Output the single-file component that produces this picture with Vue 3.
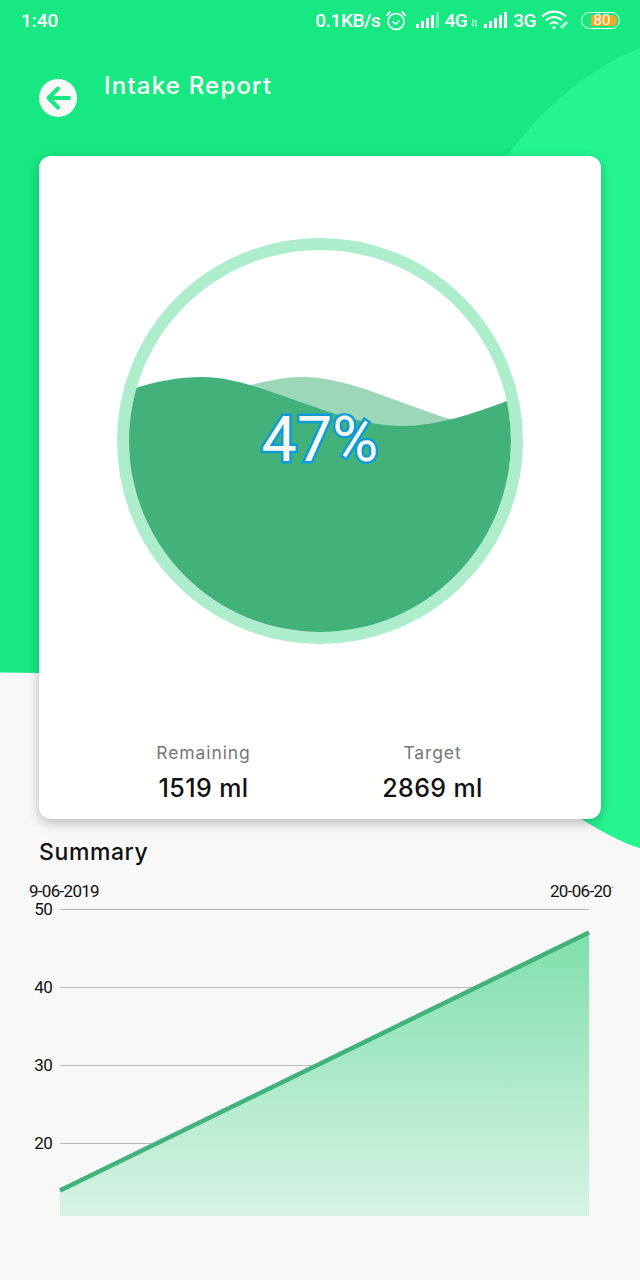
<template>
  <div class="screen">
    <!-- green backdrop with the two curved shapes -->
    <svg class="backdrop" width="640" height="900" viewBox="0 0 640 900">
      <path d="M0 0H640V848C620 842 600 830 580 818L500 720L40 673L0 672.500Z" fill="#17e882" />
      <path d="M640 48C590 68 545 105 507 156L580 818C600 830 620 842 640 848Z" fill="#25f58f" />
    </svg>

    <div class="status-bar">
      <span class="time">1:40</span>
      <div class="status-right">
        <span class="speed">0.1KB/s</span>
        <svg class="alarm" width="22" height="22" viewBox="0 0 22 22" fill="none" stroke="#fff">
          <circle cx="11" cy="12.5" r="8" stroke-width="1.6" />
          <path d="M7.5 12.5l3 2.5 4-3.5" stroke-width="1.5" />
          <path d="M1.5 6.5L5.5 2.5M20.5 6.5L16.5 2.5" stroke-width="1.8" />
        </svg>
        <svg class="signal" width="24" height="18" viewBox="0 0 24 18">
          <rect x="0" y="13" width="3" height="4" fill="#fff" />
          <rect x="5" y="10" width="3" height="7" fill="#fff" />
          <rect x="10" y="7" width="3" height="10" fill="#fff" />
          <rect x="15" y="4" width="3" height="13" fill="#fff" />
          <rect x="20" y="1" width="3" height="16" fill="#fff" opacity="0.4" />
        </svg>
        <span class="net">4G</span>
        <svg class="arrows" width="7" height="8" viewBox="0 0 7 8" fill="none" stroke="#fff" stroke-width="1">
          <path d="M2 0V7M0.5 5.5L2 7M5 8V1M3.5 2.5L5 1" />
        </svg>
        <svg class="signal two" width="24" height="18" viewBox="0 0 24 18">
          <rect x="0" y="13" width="3" height="4" fill="#fff" />
          <rect x="5" y="10" width="3" height="7" fill="#fff" />
          <rect x="10" y="7" width="3" height="10" fill="#fff" />
          <rect x="15" y="4" width="3" height="13" fill="#fff" />
          <rect x="20" y="1" width="3" height="16" fill="#fff" />
        </svg>
        <span class="net">3G</span>
        <svg class="wifi" width="29" height="20" viewBox="0 0 29 20" fill="none" stroke="#fff" stroke-width="2.2">
          <path d="M1 6.5C8 0 18 0 25 6.5" />
          <path d="M5 10.5C10 6 16 6 21 10.5" />
          <path d="M9 14C11.5 12 14.500 12 17 14" />
          <circle cx="13" cy="17.500" r="1.500" fill="#fff" stroke="none" />
          <path d="M20 18L26 12" stroke-width="3" opacity="0.7" />
        </svg>
        <div class="battery">
          <span class="battery-fill">80</span>
        </div>
      </div>
    </div>

    <div class="top-bar">
      <button class="back">
        <svg width="38" height="38" viewBox="0 0 38 38">
          <circle cx="19" cy="19" r="19" fill="#f8f8f8" />
          <path d="M19 9.500L9.500 19L19 28.500M10.500 19H30" fill="none" stroke="#17e882" stroke-width="4" stroke-linecap="round" stroke-linejoin="round" />
        </svg>
      </button>
      <h1 class="title">Intake Report</h1>
    </div>

    <div class="card">
      <svg class="gauge" width="406" height="406" viewBox="117 238 406 406">
        <defs>
          <clipPath id="water">
            <circle cx="320" cy="441" r="191" />
          </clipPath>
        </defs>
        <circle cx="320" cy="441" r="197" fill="#fff" stroke="#adedcc" stroke-width="12" />
        <g clip-path="url(#water)">
          <path d="M200 400C250 385 275 377 303 377C350 377 400 405 460 422L460 470H200Z" fill="#9cd8b8" />
          <path d="M100 400C140 385 170 377 203 377C260 377 335 426 403 426C440 426 480 412 530 392V660H100Z" fill="#43b27a" />
        </g>
      </svg>
      <span class="percent">47%</span>

      <div class="stats">
        <div class="stat">
          <span class="stat-label">Remaining</span>
          <span class="stat-value">1519 ml</span>
        </div>
        <div class="stat">
          <span class="stat-label">Target</span>
          <span class="stat-value">2869 ml</span>
        </div>
      </div>
    </div>

    <h2 class="summary">Summary</h2>

    <svg class="chart" width="640" height="360" viewBox="0 880 640 360">
      <defs>
        <linearGradient id="area" x1="0" y1="0" x2="0" y2="1">
          <stop offset="0" stop-color="#7fdfac" />
          <stop offset="1" stop-color="#d8f3e6" />
        </linearGradient>
        <clipPath id="chart-clip">
          <rect x="0" y="880" width="613" height="360" />
        </clipPath>
      </defs>
      <g class="dates" clip-path="url(#chart-clip)">
        <text x="29" y="897">9-06-2019</text>
        <text x="550" y="897">20-06-2019</text>
      </g>
      <g v-for="tick in ticks" :key="tick.label">
        <line x1="60" x2="589" :y1="tick.y" :y2="tick.y" stroke="#b9b9b9" stroke-width="1" />
        <text class="tick" x="52" :y="tick.y + 5" text-anchor="end">{{ tick.label }}</text>
      </g>
      <path d="M60 1190L589 932V1216H60Z" fill="url(#area)" />
      <path d="M60 1190.500L589 932.500" fill="none" stroke="#43b27a" stroke-width="4.500" />
    </svg>
  </div>
</template>

<script setup>
const ticks = [
  { label: '50', y: 909.5 },
  { label: '40', y: 987.5 },
  { label: '30', y: 1065.5 },
  { label: '20', y: 1143.5 }
]
</script>

<style>
html,
body {
  margin: 0;
  background: #f8f8f8;
}
</style>

<style scoped>
.screen {
  position: relative;
  width: 640px;
  height: 1280px;
  overflow: hidden;
  background: #f8f8f8;
  font-family: Inter, "Noto Sans", sans-serif;
}

.backdrop {
  position: absolute;
  top: 0;
  left: 0;
}

.status-bar {
  position: relative;
  display: flex;
  justify-content: space-between;
  align-items: center;
  height: 40px;
  padding: 0 21px;
  color: #fff;
  font-family: Roboto, sans-serif;
  font-weight: 500;
  font-size: 19px;
}

.status-right {
  display: flex;
  align-items: center;
}

.speed {
  margin-right: 4px;
  letter-spacing: -0.4px;
}

.signal {
  margin-left: 9px;
}

.signal.two {
  margin-left: 6px;
}

.net {
  margin-left: 5px;
  letter-spacing: -0.5px;
}

.arrows {
  margin-left: 4px;
  margin-top: 6px;
}

.wifi {
  margin-left: 5px;
}

.battery {
  width: 39px;
  height: 17px;
  margin-left: 11px;
  margin-right: -1px;
  padding: 2px;
  box-sizing: border-box;
  border: 1.5px solid #fff;
  border-radius: 9px;
  display: flex;
  justify-content: flex-end;
}

.battery-fill {
  width: 26px;
  padding-right: 4px;
  box-sizing: border-box;
  background: #f5a623;
  border-radius: 1px 6px 6px 1px;
  font-size: 15px;
  font-weight: 400;
  line-height: 11px;
  text-align: center;
}

.top-bar {
  position: relative;
  display: flex;
  align-items: flex-start;
  height: 116px;
  padding-left: 39px;
}

.back {
  width: 38px;
  height: 38px;
  margin-top: 39px;
  padding: 0;
  border: none;
  background: none;
}

.back svg {
  display: block;
}

.title {
  margin: 29px 0 0 27px;
  color: #fff;
  font-size: 24px;
  font-weight: 500;
  line-height: 34px;
  letter-spacing: 1.2px;
}

.card {
  position: relative;
  display: flex;
  flex-direction: column;
  align-items: center;
  width: 562px;
  height: 663px;
  margin-left: 39px;
  padding-top: 82px;
  box-sizing: border-box;
  background: #fff;
  border-radius: 12px;
  box-shadow: 0 4px 12px rgba(0, 0, 0, 0.25);
}

.gauge {
  display: block;
}

.percent {
  position: absolute;
  top: 244px;
  left: 0;
  width: 100%;
  text-align: center;
  font-family: Roboto, sans-serif;
  font-size: 63px;
  line-height: 80px;
  color: #f8f8f8;
  -webkit-text-stroke: 5px #0e9bd8;
  paint-order: stroke fill;
}

.stats {
  display: grid;
  grid-template-columns: 229px 229px;
  align-self: flex-start;
  margin-top: 96px;
  padding-left: 50px;
}

.stat {
  display: flex;
  flex-direction: column;
  align-items: center;
}

.stat-label {
  color: #777;
  font-size: 17.5px;
  line-height: 26px;
  letter-spacing: 0.9px;
}

.stat-value {
  margin-top: 5px;
  color: #111;
  font-size: 25px;
  font-weight: 500;
  line-height: 34px;
  letter-spacing: 0.4px;
}

.summary {
  position: relative;
  margin: 17px 0 0 39px;
  color: #111;
  font-size: 23px;
  font-weight: 500;
  line-height: 32px;
  letter-spacing: 0.6px;
}

.chart {
  display: block;
  margin-top: 12px;
}

.dates text,
.tick {
  font-family: Roboto, sans-serif;
  font-size: 17px;
  letter-spacing: -0.7px;
  fill: #111;
}
</style>
